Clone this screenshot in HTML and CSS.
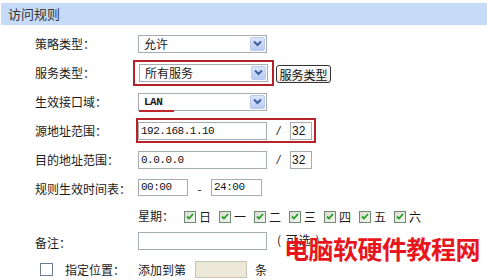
FILE: index.html
```html
<!DOCTYPE html>
<html lang="zh-CN">
  <head>
    <meta charset="UTF-8" />
    <title>访问规则</title>
    <link rel="stylesheet" href="styles.css">
  </head>
  <body>
    <div class="panel">
      <div class="panel-title">访问规则</div>
      <div class="form">
        <div class="row">
          <span class="label">策略类型：</span>
          <div class="select">
            <span class="select-text">允许</span>
            <span class="select-arrow"><svg width="9" height="7" viewBox="0 0 9 7"><path d="M1 1.5 L4.5 5 L8 1.5" fill="none" stroke="#3f5f9c" stroke-width="2"/></svg></span>
          </div>
        </div>
        <div class="row">
          <span class="label">服务类型：</span>
          <span class="mark mark-service">
            <div class="select">
              <span class="select-text">所有服务</span>
              <span class="select-arrow"><svg width="9" height="7" viewBox="0 0 9 7"><path d="M1 1.5 L4.5 5 L8 1.5" fill="none" stroke="#3f5f9c" stroke-width="2"/></svg></span>
            </div>
          </span>
          <button type="button" class="btn">服务类型</button>
        </div>
        <div class="row">
          <span class="label">生效接口域：</span>
          <div class="select underlined">
            <span class="select-text mono">LAN</span>
            <span class="select-arrow"><svg width="9" height="7" viewBox="0 0 9 7"><path d="M1 1.5 L4.5 5 L8 1.5" fill="none" stroke="#3f5f9c" stroke-width="2"/></svg></span>
          </div>
        </div>
        <div class="row">
          <span class="label">源地址范围：</span>
          <span class="mark mark-source">
            <input type="text" class="input ip" value="192.168.1.10" />
            <span class="slash">/</span>
            <input type="text" class="input mask" value="32" />
          </span>
        </div>
        <div class="row">
          <span class="label">目的地址范围：</span>
          <input type="text" class="input ip" value="0.0.0.0" />
          <span class="slash">/</span>
          <input type="text" class="input mask" value="32" />
        </div>
        <div class="row row-time">
          <span class="label">规则生效时间表：</span>
          <input type="text" class="input time" value="00:00" />
          <span class="dash">-</span>
          <input type="text" class="input time time-end" value="24:00" />
        </div>
        <div class="row row-week">
          <span class="label"></span>
          <span class="week-title">星期：</span>
          <span class="day"><span class="check on"><svg width="8" height="7" viewBox="0 0 8 7"><path d="M1 3.5 L3 5.5 L7 1" fill="none" stroke="#22a022" stroke-width="1.8"/></svg></span>日</span>
          <span class="day"><span class="check on"><svg width="8" height="7" viewBox="0 0 8 7"><path d="M1 3.5 L3 5.5 L7 1" fill="none" stroke="#22a022" stroke-width="1.8"/></svg></span>一</span>
          <span class="day"><span class="check on"><svg width="8" height="7" viewBox="0 0 8 7"><path d="M1 3.5 L3 5.5 L7 1" fill="none" stroke="#22a022" stroke-width="1.8"/></svg></span>二</span>
          <span class="day"><span class="check on"><svg width="8" height="7" viewBox="0 0 8 7"><path d="M1 3.5 L3 5.5 L7 1" fill="none" stroke="#22a022" stroke-width="1.8"/></svg></span>三</span>
          <span class="day"><span class="check on"><svg width="8" height="7" viewBox="0 0 8 7"><path d="M1 3.5 L3 5.5 L7 1" fill="none" stroke="#22a022" stroke-width="1.8"/></svg></span>四</span>
          <span class="day"><span class="check on"><svg width="8" height="7" viewBox="0 0 8 7"><path d="M1 3.5 L3 5.5 L7 1" fill="none" stroke="#22a022" stroke-width="1.8"/></svg></span>五</span>
          <span class="day"><span class="check on"><svg width="8" height="7" viewBox="0 0 8 7"><path d="M1 3.5 L3 5.5 L7 1" fill="none" stroke="#22a022" stroke-width="1.8"/></svg></span>六</span>
        </div>
        <div class="row row-note">
          <span class="label">备注：</span>
          <input type="text" class="input note" value="" />
          <span class="hint">( 可选 )</span>
        </div>
        <div class="row row-pos">
          <span class="check plain"></span>
          <span class="pos-label">指定位置：</span>
          <span class="pos-text">添加到第</span>
          <input type="text" class="input disabled" value="" disabled />
          <span class="pos-unit">条</span>
        </div>
      </div>
      <div class="watermark">电脑软硬件教程网</div>
    </div>
  </body>
</html>
```
FILE: styles.css
```css
body {
  margin: 0;
  font-family: "Noto Sans CJK SC", "Liberation Sans", sans-serif;
  font-size: 12px;
  color: #1a1a1a;
  background: #fff;
}
.panel {
  position: relative;
  width: 487px;
  height: 280px;
  overflow: hidden;
}
.panel-title {
  margin: 3px 0 0 1px;
  height: 22px;
  line-height: 22px;
  padding-left: 7px;
  background-color: #c6dbf7;
  color: #333;
  font-size: 13px;
}
.form {
  padding: 4px 0 0 35px;
}
.row {
  display: flex;
  align-items: center;
  height: 29px;
}
.row-time {
  height: 28px;
}
.row-week,
.row-note {
  height: 27px;
}
.row-pos {
  height: 26px;
}
.label {
  width: 103px;
  flex-shrink: 0;
}
.select {
  position: relative;
  display: flex;
  align-items: center;
  justify-content: space-between;
  box-sizing: border-box;
  width: 129px;
  height: 18px;
  padding: 1px;
  border: 1px solid #a5acb2;
  background: #fff;
}
.select-text {
  padding-left: 4px;
}
.select-arrow {
  display: flex;
  align-items: center;
  justify-content: center;
  box-sizing: border-box;
  width: 15px;
  height: 14px;
  border: 1px solid #b9c9ef;
  border-radius: 2px;
  background: linear-gradient(#dbe5fb, #b9cbf3);
}
.mono {
  font-family: "Liberation Mono", monospace;
  font-size: 11px;
  font-weight: bold;
  letter-spacing: -0.5px;
}
.underlined::after {
  content: "";
  position: absolute;
  left: 0;
  bottom: -2px;
  width: 35px;
  height: 2px;
  background: #c0262c;
}
.mark {
  display: flex;
  align-items: center;
  border: 2px solid #b52229;
}
.mark-service {
  margin-left: -5px;
  padding: 2px 4px;
}
.mark-source {
  margin-left: -2px;
  padding: 2px 2px 1px 0;
}
.btn {
  margin-left: 2px;
  margin-top: 2px;
  width: 55px;
  height: 18px;
  padding: 0;
  border: 1px solid #333;
  border-radius: 3px;
  background: linear-gradient(#ffffff, #ecebe6);
  font-family: inherit;
  font-size: 12px;
  color: #111;
}
.input {
  box-sizing: border-box;
  height: 18px;
  padding: 0 2px;
  border: 1px solid #a5acb2;
  font-family: "Liberation Mono", monospace;
  font-size: 11px;
  letter-spacing: -0.5px;
  color: #111;
  background: #fff;
}
.ip {
  width: 129px;
}
.mask {
  width: 22px;
  padding: 0 1px;
  font-family: "Liberation Sans", sans-serif;
  font-size: 12px;
  letter-spacing: 0;
}
.slash {
  width: 23px;
  text-align: center;
  font-family: "Liberation Sans", sans-serif;
  font-style: italic;
}
.time {
  width: 50px;
  height: 17px;
  margin-top: -2px;
}
.time-end {
  width: 51px;
}
.dash {
  width: 23px;
  text-align: center;
}
.week-title {
  width: 46px;
}
.day {
  display: flex;
  align-items: center;
  gap: 3px;
  margin-right: 8px;
  margin-top: 2px;
}
.check {
  display: flex;
  align-items: center;
  justify-content: center;
  box-sizing: border-box;
  width: 12px;
  height: 12px;
  border: 1px solid #6f8a72;
  background: linear-gradient(135deg, #dcdcd4, #f6f6f2);
}
.check.plain {
  width: 13px;
  height: 13px;
  margin-left: 5px;
  border-color: #6c7c8c;
  background: #fff;
}
.note {
  width: 129px;
  margin-top: -4px;
}
.hint {
  margin-left: 10px;
  margin-top: -6px;
  letter-spacing: 1px;
}
.pos-label {
  margin-left: 12px;
  width: 73px;
}
.pos-text {
  width: 57px;
}
.disabled {
  width: 52px;
  height: 17px;
  background: #ece9d8;
  border-color: #c8c4b4;
}
.pos-unit {
  margin-left: 8px;
}
.watermark {
  position: absolute;
  left: 284px;
  top: 233px;
  font-size: 25px;
  line-height: 30px;
  font-weight: bold;
  color: #e8161c;
  letter-spacing: -0.5px;
}
```
